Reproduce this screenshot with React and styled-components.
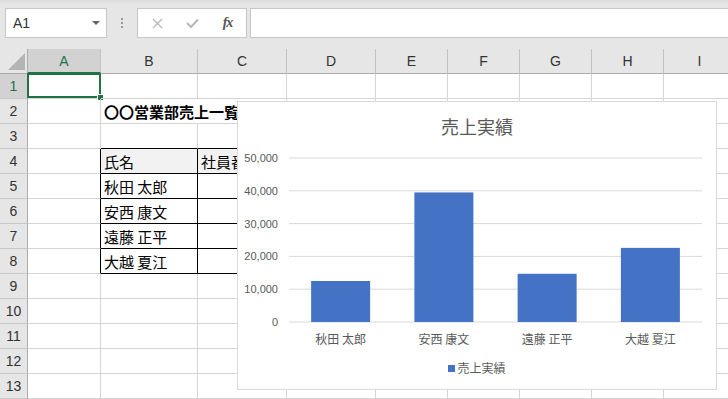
import React from "react";
import styled, { createGlobalStyle } from "styled-components";

const GlobalStyle = createGlobalStyle`
  html, body {
    margin: 0;
    padding: 0;
    background: #fff;
  }
  body {
    font-family: "Noto Sans CJK JP", "Liberation Sans", sans-serif;
    overflow: hidden;
  }
`;

const GREEN = "#217346";
const GRID = "#d4d4d4";
const BAR = "#4472c4";
const CHART_TEXT = "#595959";

const COLS = [
  { key: "A", width: 73 },
  { key: "B", width: 97 },
  { key: "C", width: 89 },
  { key: "D", width: 89 },
  { key: "E", width: 72 },
  { key: "F", width: 72 },
  { key: "G", width: 72 },
  { key: "H", width: 72 },
  { key: "I", width: 72 },
];
const ROWS = Array.from({ length: 13 }, (_, i) => i + 1);

// セルの中身
const CELLS = {
  B2: { text: "〇〇営業部売上一覧", bold: true },
  B4: { text: "氏名", bg: "#f2f2f2" },
  C4: { text: "社員番号", bg: "#f2f2f2" },
  B5: { text: "秋田 太郎" },
  B6: { text: "安西 康文" },
  B7: { text: "遠藤 正平" },
  B8: { text: "大越 夏江" },
};

const SALES = [
  { name: "秋田 太郎", value: 12500 },
  { name: "安西 康文", value: 39500 },
  { name: "遠藤 正平", value: 14700 },
  { name: "大越 夏江", value: 22600 },
];

const Page = styled.div`
  position: relative;
  width: 100vw;
  height: 100vh;
  overflow: hidden;
`;

/* ---------- formula bar ---------- */
const FormulaBar = styled.div`
  display: flex;
  align-items: flex-start;
  height: 49px;
  box-sizing: border-box;
  padding: 8px 0 0 5px;
  background: linear-gradient(#dadada 0px, #e6e6e6 4px, #e6e6e6 100%);
`;

const Box = styled.div`
  display: flex;
  align-items: center;
  box-sizing: border-box;
  height: 30px;
  background: #fff;
  border: 1px solid #c6c6c6;
  flex: ${(p) => (p.$grow ? "1" : "none")};
  width: ${(p) => (p.$width ? `${p.$width}px` : "auto")};
  margin-left: ${(p) => p.$gap || 0}px;
`;

const NameText = styled.span`
  flex: 1;
  padding-left: 7px;
  font-family: "Liberation Sans", sans-serif;
  font-size: 14px;
  color: #333;
`;

const Caret = styled.span`
  width: 0;
  height: 0;
  margin-right: 6px;
  border-left: 4px solid transparent;
  border-right: 4px solid transparent;
  border-top: 4px solid #666;
`;

const Dots = styled.div`
  display: flex;
  flex-direction: column;
  align-items: center;
  justify-content: center;
  gap: 2px;
  width: 30px;
  height: 30px;
  span {
    width: 2px;
    height: 2px;
    background: #9a9a9a;
  }
`;

const IconSlot = styled.span`
  display: flex;
  align-items: center;
  justify-content: center;
  width: 35px;
  height: 28px;
`;

const Fx = styled.span`
  font-family: "Liberation Serif", serif;
  font-style: italic;
  font-weight: 700;
  font-size: 14px;
  color: #555;
  letter-spacing: -1px;
`;

/* ---------- sheet ---------- */
const Sheet = styled.div`
  display: grid;
  grid-template-columns: 28px ${COLS.map((c) => `${c.width}px`).join(" ")};
  grid-auto-rows: 25px;
`;

const Corner = styled.div`
  position: relative;
  box-sizing: border-box;
  background: #e6e6e6;
  border-right: 1px solid #ababab;
  border-bottom: 1px solid #ababab;
  &::after {
    content: "";
    position: absolute;
    right: 2px;
    bottom: 3px;
    width: 0;
    height: 0;
    border-left: 17px solid transparent;
    border-bottom: 17px solid #b4b4b4;
  }
`;

const ColHead = styled.div`
  display: flex;
  align-items: center;
  justify-content: center;
  box-sizing: border-box;
  background: ${(p) => (p.$selected ? "#d2d2d2" : "#e6e6e6")};
  border-right: 1px solid #c2c2c2;
  border-bottom: ${(p) => (p.$selected ? `2px solid ${GREEN}` : "1px solid #ababab")};
  font-family: "Liberation Sans", sans-serif;
  font-size: 14px;
  color: ${(p) => (p.$selected ? GREEN : "#333")};
`;

const RowHead = styled.div`
  display: flex;
  align-items: center;
  justify-content: center;
  box-sizing: border-box;
  background: ${(p) => (p.$selected ? "#d2d2d2" : "#e6e6e6")};
  border-right: 1px solid #ababab;
  border-bottom: 1px solid #c8c8c8;
  font-family: "Liberation Sans", sans-serif;
  font-size: 14px;
  color: ${(p) => (p.$selected ? GREEN : "#333")};
`;

const Cell = styled.div`
  position: relative;
  display: flex;
  align-items: center;
  box-sizing: border-box;
  padding: 0 3px;
  white-space: nowrap;
  background: ${(p) => p.$bg || "transparent"};
  border-right: 1px solid ${(p) => p.$right || GRID};
  border-bottom: 1px solid ${(p) => p.$bottom || GRID};
  font-size: 15px;
  font-weight: ${(p) => (p.$bold ? 700 : 400)};
  color: #000;
`;

const Selection = styled.div`
  position: absolute;
  top: -1px;
  left: -1px;
  right: -1px;
  bottom: 0;
  border: 2px solid ${GREEN};
`;

const Handle = styled.div`
  position: absolute;
  left: 69px;
  top: 20px;
  width: 5px;
  height: 5px;
  background: ${GREEN};
  border: 1px solid #fff;
`;

/* ---------- chart ---------- */
const Chart = styled.div`
  position: absolute;
  left: 237px;
  top: 101px;
  width: 480px;
  height: 289px;
  box-sizing: border-box;
  background: #fff;
  border: 1px solid #d9d9d9;
  display: flex;
  flex-direction: column;
  align-items: center;
`;

const ChartTitle = styled.div`
  padding-top: 12px;
  font-size: 18px;
  line-height: 24px;
  color: ${CHART_TEXT};
`;

const Legend = styled.div`
  display: flex;
  align-items: center;
  gap: 2px;
  margin-top: 8px;
  font-size: 12px;
  line-height: 16px;
  color: ${CHART_TEXT};
  &::before {
    content: "";
    width: 7px;
    height: 7px;
    background: ${BAR};
  }
`;

function isTable(col, row) {
  return (col === "B" || col === "C") && row >= 4 && row <= 8;
}

function borders(col, row) {
  let right;
  let bottom;
  if (isTable(col, row) || (col === "A" && row >= 4 && row <= 8)) right = "#000";
  if (isTable(col, row) || ((col === "B" || col === "C") && row === 3)) bottom = "#000";
  if (col === "B" && row === 2) right = "transparent"; // 文字がはみ出すセル
  return { right, bottom };
}

function BarChart() {
  const left = 51;
  const right = 464;
  const zeroY = 184;
  const step = 32.8; // 10,000 ごとの高さ
  const catW = (right - left) / SALES.length;
  const barW = 59;
  const ticks = [0, 10000, 20000, 30000, 40000, 50000];

  return (
    <svg width="478" height="214" style={{ display: "block" }}>
      {ticks.map((t) => {
        const y = zeroY - (t / 10000) * step;
        return (
          <g key={t}>
            <line x1={left} x2={right} y1={y} y2={y} stroke="#d9d9d9" strokeWidth="1" />
            <text
              x="40"
              y={y + 4}
              textAnchor="end"
              fontSize="11"
              fontFamily="Liberation Sans, sans-serif"
              fill={CHART_TEXT}
            >
              {t.toLocaleString("en-US")}
            </text>
          </g>
        );
      })}
      {SALES.map((s, i) => {
        const h = (s.value / 10000) * step;
        const cx = left + catW * i + catW / 2;
        return (
          <g key={s.name}>
            <rect x={cx - barW / 2} y={zeroY - h} width={barW} height={h} fill={BAR} />
            <text
              x={cx}
              y="206"
              textAnchor="middle"
              fontSize="12"
              fontFamily="Noto Sans CJK JP, sans-serif"
              fill={CHART_TEXT}
            >
              {s.name}
            </text>
          </g>
        );
      })}
    </svg>
  );
}

export default function App() {
  return (
    <Page>
      <GlobalStyle />
      <FormulaBar>
        <Box $width={102}>
          <NameText>A1</NameText>
          <Caret />
        </Box>
        <Dots>
          <span />
          <span />
          <span />
        </Dots>
        <Box $width={110}>
          <IconSlot style={{ marginLeft: 2 }}>
            <svg width="11" height="11" viewBox="0 0 11 11">
              <path d="M1 1 L10 10 M10 1 L1 10" stroke="#b8b8b8" strokeWidth="1.4" />
            </svg>
          </IconSlot>
          <IconSlot>
            <svg width="13" height="10" viewBox="0 0 13 10">
              <path d="M1 5 L5 9 L12 1.5" stroke="#b8b8b8" strokeWidth="2" fill="none" />
            </svg>
          </IconSlot>
          <IconSlot>
            <Fx>fx</Fx>
          </IconSlot>
        </Box>
        <Box $grow $gap={3} style={{ borderRight: "none" }} />
      </FormulaBar>

      <Sheet>
        <Corner />
        {COLS.map((c) => (
          <ColHead key={c.key} $selected={c.key === "A"}>
            {c.key}
          </ColHead>
        ))}
        {ROWS.map((r) => (
          <React.Fragment key={r}>
            <RowHead $selected={r === 1}>{r}</RowHead>
            {COLS.map((c) => {
              const id = `${c.key}${r}`;
              const data = CELLS[id] || {};
              const b = borders(c.key, r);
              return (
                <Cell key={id} $bg={data.bg} $bold={data.bold} $right={b.right} $bottom={b.bottom}>
                  {data.text}
                  {id === "A1" && (
                    <>
                      <Selection />
                      <Handle />
                    </>
                  )}
                </Cell>
              );
            })}
          </React.Fragment>
        ))}
      </Sheet>

      <Chart>
        <ChartTitle>売上実績</ChartTitle>
        <BarChart />
        <Legend>売上実績</Legend>
      </Chart>
    </Page>
  );
}
